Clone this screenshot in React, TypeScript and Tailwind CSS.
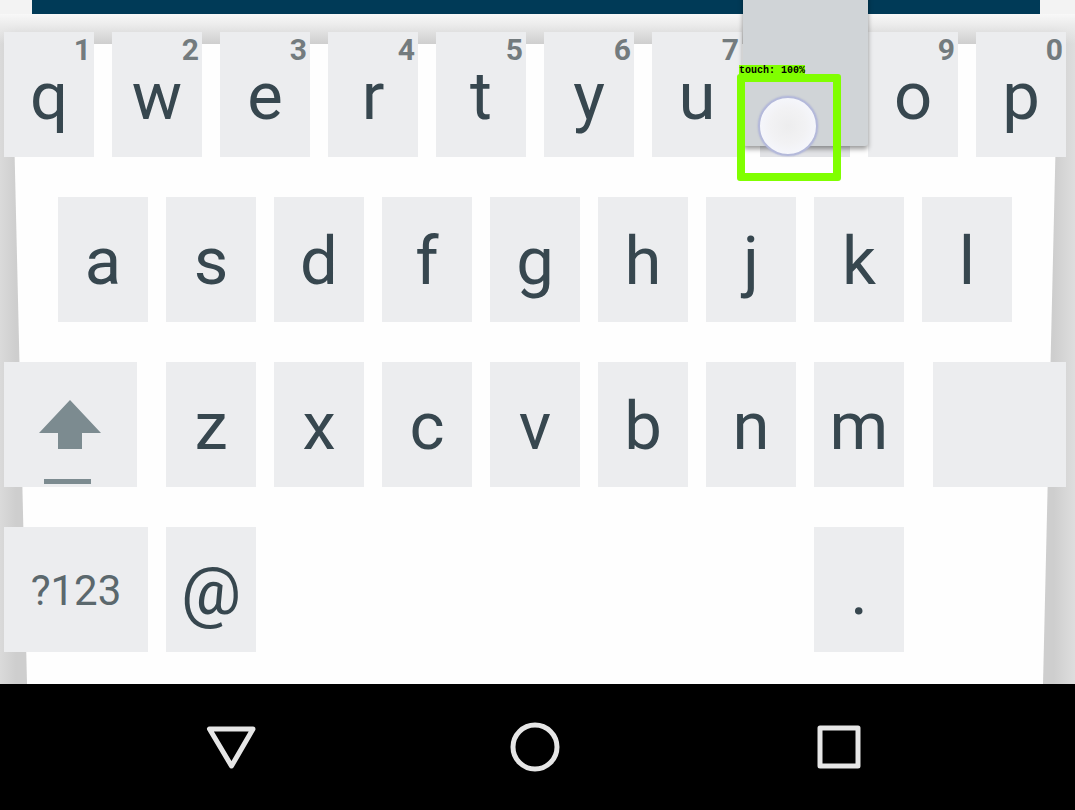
import React from "react";

type KeyProps = {
  label: string;
  name?: string;
  hint?: string;
  small?: boolean;
};

function Key({ label, name, hint, small }: KeyProps) {
  return (
    <button
      type="button"
      aria-label={name}
      className="relative flex h-[125px] min-w-0 items-center justify-center bg-[#ecedef] pt-[3px]"
    >
      {hint && (
        <span className="absolute top-[3px] right-[3px] text-[30px] leading-[30px] font-bold text-[#737b7e]">
          {hint}
        </span>
      )}
      <span
        className={
          small
            ? "text-[42px] leading-[50px] text-[#5b686d]"
            : "text-[67px] leading-[80px] text-[#37474f]"
        }
      >
        {label}
      </span>
    </button>
  );
}

function PressedKey() {
  return (
    <div className="relative h-[125px] min-w-0">
      <button type="button" aria-label="i" className="block h-full w-full bg-[#e2e3e6]" />
      <div className="absolute -right-[18px] bottom-[11px] -left-[17px] z-10 h-[160px] rounded-[3px] bg-[#d0d4d7] shadow-[0_3px_5px_rgba(0,0,0,0.4)]" />
      <div className="absolute top-[42px] -left-[23px] z-20 h-[107px] w-[104px] rounded-[3px] border-8 border-[#80ff00]">
        <span className="absolute -top-[17px] -left-1.5 bg-[#80ff00] font-['Liberation_Mono',monospace] text-[10px] leading-[12px] font-bold whitespace-nowrap text-black">
          touch: 100%
        </span>
        <span className="absolute top-3.5 left-[13px] h-[60px] w-[60px] rounded-full border-2 border-[#b4b9da] bg-[radial-gradient(circle,#ededee_0%,#f2f2f4_45%,#f5f6fb_70%)] shadow-[0_0_2px_#a4aad0]" />
      </div>
    </div>
  );
}

function Backdrop() {
  return (
    <svg
      aria-hidden="true"
      className="absolute inset-0 h-full w-full"
      viewBox="0 0 1075 670"
      preserveAspectRatio="none"
    >
      <defs>
        <linearGradient id="side" x1="0" x2="1" y1="0" y2="0">
          <stop offset="0" stopColor="#dadada" />
          <stop offset="0.015" stopColor="#cecece" />
          <stop offset="0.98" stopColor="#cecece" />
          <stop offset="1" stopColor="#dedede" />
        </linearGradient>
        <linearGradient id="fade" x1="0" x2="0" y1="0" y2="1">
          <stop offset="0" stopColor="#f8f8f8" />
          <stop offset="0.35" stopColor="#ececec" />
          <stop offset="1" stopColor="#ececec" stopOpacity="0" />
        </linearGradient>
      </defs>
      <rect width="1075" height="670" fill="url(#side)" />
      <rect width="1075" height="30" fill="url(#fade)" />
      <path d="M12 30H1058L1043 670H27Z" fill="#fefefe" />
    </svg>
  );
}

const topRow = ["q", "w", "e", "r", "t", "y", "u", "i", "o", "p"];
const homeRow = ["a", "s", "d", "f", "g", "h", "j", "k", "l"];
const bottomRow = ["z", "x", "c", "v", "b", "n", "m"];

export default function App() {
  return (
    <main className="min-h-screen overflow-hidden bg-black font-[Roboto,sans-serif]">
      <header className="bg-[#f3f3f3] pr-[35px] pl-8">
        <div className="h-3.5 bg-[#003a57]" />
      </header>

      <section
        aria-label="Keyboard"
        className="relative pt-[18px] pr-[9px] pb-8 pl-1"
      >
        <Backdrop />
        <div className="relative flex flex-col gap-10">
          <div className="grid grid-cols-10 gap-[18px]">
            {topRow.map((k, n) =>
              k === "i" ? (
                <PressedKey key={k} />
              ) : (
                <Key key={k} label={k} hint={String((n + 1) % 10)} />
              ),
            )}
          </div>

          <div className="grid grid-cols-9 gap-[18px] px-[54px]">
            {homeRow.map((k) => (
              <Key key={k} label={k} />
            ))}
          </div>

          <div className="grid grid-cols-[133fr_738fr_133fr] gap-[29px]">
            <button
              type="button"
              aria-label="Shift"
              className="flex h-[125px] items-end justify-center bg-[#ecedef] pb-0.5"
            >
              <svg width="64" height="86" viewBox="0 0 64 86" fill="#7c8b90">
                <path d="M31 1L62 34H43V50H19V34H0Z" />
                <rect x="5" y="80" width="47" height="5" />
              </svg>
            </button>
            <div className="grid grid-cols-7 gap-[18px]">
              {bottomRow.map((k) => (
                <Key key={k} label={k} />
              ))}
            </div>
            <button type="button" aria-label="Delete" className="h-[125px] bg-[#ecedef]" />
          </div>

          <div className="grid grid-cols-[144fr_90fr_522fr_90fr_144fr] gap-[18px]">
            <Key label="?123" name="Symbols" small />
            <Key label="@" />
            <button type="button" aria-label="Space" className="h-[125px]" />
            <Key label="." />
            <button type="button" aria-label="Enter" className="h-[125px]" />
          </div>
        </div>
      </section>

      <nav className="grid h-[126px] grid-cols-3 items-center bg-black pr-[84px] pl-[79px]">
        <button type="button" aria-label="Back" className="flex justify-center">
          <svg width="52" height="52" viewBox="0 0 52 52" fill="none" stroke="#e6e6e6" strokeWidth="5" strokeLinejoin="round">
            <path d="M4.500 8H48L26.500 45Z" />
          </svg>
        </button>
        <button type="button" aria-label="Home" className="flex justify-center">
          <svg width="52" height="52" viewBox="0 0 52 52" fill="none" stroke="#e6e6e6" strokeWidth="5">
            <circle cx="26" cy="26" r="22" />
          </svg>
        </button>
        <button type="button" aria-label="Recent apps" className="flex justify-center">
          <svg width="52" height="52" viewBox="0 0 52 52" fill="none" stroke="#e6e6e6" strokeWidth="5" strokeLinejoin="round">
            <rect x="7" y="7" width="38" height="38" />
          </svg>
        </button>
      </nav>
    </main>
  );
}
